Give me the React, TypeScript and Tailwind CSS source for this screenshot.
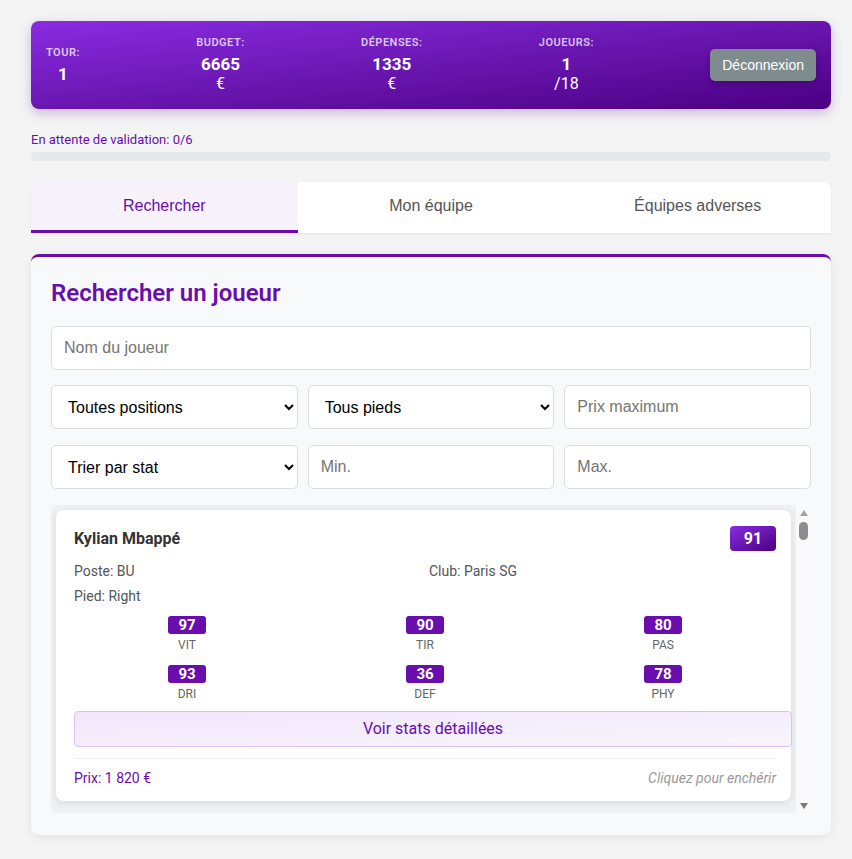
import React from "react";

type Player = {
  name: string;
  rating: number;
  pos: string;
  club: string;
  foot: string;
  price: string;
  stats: { v: number; k: string }[];
};

const PLAYER: Player = {
  name: "Kylian Mbappé",
  rating: 91,
  pos: "BU",
  club: "Paris SG",
  foot: "Right",
  price: "1 820 €",
  stats: [
    { v: 97, k: "VIT" },
    { v: 90, k: "TIR" },
    { v: 80, k: "PAS" },
    { v: 93, k: "DRI" },
    { v: 36, k: "DEF" },
    { v: 78, k: "PHY" },
  ],
};

const exo = "font-['Roboto','Noto_Sans',sans-serif]";
const arial = "font-['Liberation_Sans',Arial,sans-serif]";

function HeaderItem({ label, value, sub }: { label: string; value: string; sub?: string }) {
  return (
    <div className="flex flex-col items-center text-center">
      <span className="text-[11px] leading-[14px] font-semibold tracking-[0.5px] text-white/75 mb-[4px]">
        {label}
      </span>
      <span className="text-[17px] leading-[20px] font-bold text-white">{value}</span>
      {sub && <span className="text-[16px] leading-[20px] text-white">{sub}</span>}
    </div>
  );
}

function PlayerCard({ p }: { p: Player }) {
  return (
    <div className="bg-white rounded-[8px] shadow-[0_2px_8px_rgba(0,0,0,0.1)] pl-[18px] pr-[15px] pt-[16px] pb-[14px] mb-[10px]">
      <div className="flex items-center justify-between">
        <span className="text-[16px] font-bold text-[#333]">{p.name}</span>
        <span className="w-[46px] h-[25px] rounded-[4px] bg-gradient-to-br from-[#8a2be2] to-[#4b0082] text-white font-bold text-[16px] flex items-center justify-center">
          {p.rating}
        </span>
      </div>
      <div className="grid grid-cols-2 gap-x-2 mt-[8px] text-[14px] leading-[25px] text-[#555]">
        <span>Poste: {p.pos}</span>
        <span>Club: {p.club}</span>
        <span>Pied: {p.foot}</span>
      </div>
      <div className="grid grid-cols-3 gap-x-[12px] gap-y-[12px] mt-[7px]">
        {p.stats.map((s) => (
          <div key={s.k} className="flex flex-col items-center">
            <span className="w-[38px] h-[18px] rounded-[3px] bg-[#6a0dad] text-white font-bold text-[15px] leading-[18px] text-center">
              {s.v}
            </span>
            <span className="text-[12px] leading-[16px] mt-[3px] text-[#666]">{s.k}</span>
          </div>
        ))}
      </div>
      <button className="mt-[9px] w-[calc(100%+16px)] h-[36px] rounded-[4px] border border-[#dcc0f2] bg-gradient-to-br from-[#f1e6fb] to-[#f9f5fd] text-[#6a0dad] text-[16px]">
        Voir stats détaillées
      </button>
      <div className="border-t border-[#eee] mt-[11px] pt-[10px] flex items-center justify-between text-[14px] leading-[18px]">
        <span className="text-[#6a0dad]">Prix: {p.price}</span>
        <span className="italic text-[#999]">Cliquez pour enchérir</span>
      </div>
    </div>
  );
}

// barre de défilement dessinée (le navigateur headless n'en affiche pas)
function ScrollRail() {
  return (
    <div className="w-[15px] shrink-0 bg-[#f9f9fb] flex flex-col items-center">
      <svg width="8" height="6" viewBox="0 0 8 6" className="mt-[5px]">
        <path d="M4 0 L8 6 L0 6 Z" fill="#a3a3a3" />
      </svg>
      <div className="mt-[6px] w-[9px] h-[18px] rounded-full bg-[#8d8d8d]" />
      <div className="flex-1" />
      <svg width="8" height="6" viewBox="0 0 8 6" className="mb-[4px]">
        <path d="M0 0 L8 0 L4 6 Z" fill="#7a7a7a" />
      </svg>
    </div>
  );
}

export default function App() {
  return (
    <div className={`min-h-[859px] bg-[#f4f4f5] pt-[21px] pb-[24px] ${exo}`}>
      <div className="ml-[31px] w-[800px]">
        {/* bandeau */}
        <div className="h-[88px] rounded-[8px] bg-gradient-to-br from-[#8a2be2] to-[#4b0082] shadow-[0_4px_12px_rgba(75,0,130,0.25)] px-[15px] flex items-center justify-between">
          <HeaderItem label="TOUR:" value="1" />
          <HeaderItem label="BUDGET:" value="6665" sub="€" />
          <HeaderItem label="DÉPENSES:" value="1335" sub="€" />
          <HeaderItem label="JOUEURS:" value="1" sub="/18" />
          <button
            className={`${arial} h-[32px] px-[12px] rounded-[5px] bg-[#7f8c8d] text-white text-[14px] shadow-[0_2px_6px_rgba(0,0,0,0.25)]`}
          >
            Déconnexion
          </button>
        </div>

        {/* validation */}
        <div className="mt-[23px] text-[13px] leading-[16px] text-[#6a0dad]">En attente de validation: 0/6</div>
        <div className="mt-[4px] h-[9px] rounded-full bg-[#e6e8eb]" />

        {/* onglets */}
        <div className={`${arial} mt-[21px] h-[51px] bg-white rounded-t-[8px] shadow-[0_1px_3px_rgba(0,0,0,0.08)] grid grid-cols-3 overflow-hidden`}>
          <div className="bg-[#f8f2fd] border-b-[3px] border-[#6a0dad] text-[#6a0dad] text-[16px] flex items-center justify-center">
            Rechercher
          </div>
          <div className="text-[#555] text-[16px] flex items-center justify-center pb-[3px]">Mon équipe</div>
          <div className="text-[#555] text-[16px] flex items-center justify-center pb-[3px]">Équipes adverses</div>
        </div>

        {/* recherche */}
        <div className="mt-[21px] bg-[#f8f9fa] rounded-[8px] border-t-[3px] border-[#6a0dad] shadow-[0_2px_10px_rgba(0,0,0,0.08)] px-[20px] pt-[20px] pb-[22px]">
          <h2 className="text-[24px] leading-[32px] font-semibold text-[#6a0dad]">Rechercher un joueur</h2>
          <input
            placeholder="Nom du joueur"
            className={`${arial} mt-[17px] w-full h-[44px] rounded-[5px] border border-[#ddd] bg-white px-[12px] text-[16px] placeholder:text-[#757575] outline-none`}
          />
          <div className={`${arial} mt-[15px] grid grid-cols-3 gap-x-[10px] gap-y-[16px] text-[16px]`}>
            <select className="h-[44px] rounded-[5px] border border-[#ddd] bg-white px-[12px] text-black">
              <option>Toutes positions</option>
            </select>
            <select className="h-[44px] rounded-[5px] border border-[#ddd] bg-white px-[12px] text-black">
              <option>Tous pieds</option>
            </select>
            <input placeholder="Prix maximum" className="h-[44px] rounded-[5px] border border-[#ddd] bg-white px-[12px] placeholder:text-[#757575] outline-none" />
            <select className="h-[44px] rounded-[5px] border border-[#ddd] bg-white px-[12px] text-black">
              <option>Trier par stat</option>
            </select>
            <input placeholder="Min." className="h-[44px] rounded-[5px] border border-[#ddd] bg-white px-[12px] placeholder:text-[#757575] outline-none" />
            <input placeholder="Max." className="h-[44px] rounded-[5px] border border-[#ddd] bg-white px-[12px] placeholder:text-[#757575] outline-none" />
          </div>

          <div className="mt-[16px] h-[308px] flex bg-[#f0f1f4] rounded-[5px]">
            <div className="flex-1 overflow-hidden p-[5px]">
              <PlayerCard p={PLAYER} />
            </div>
            <ScrollRail />
          </div>
        </div>
      </div>
    </div>
  );
}
